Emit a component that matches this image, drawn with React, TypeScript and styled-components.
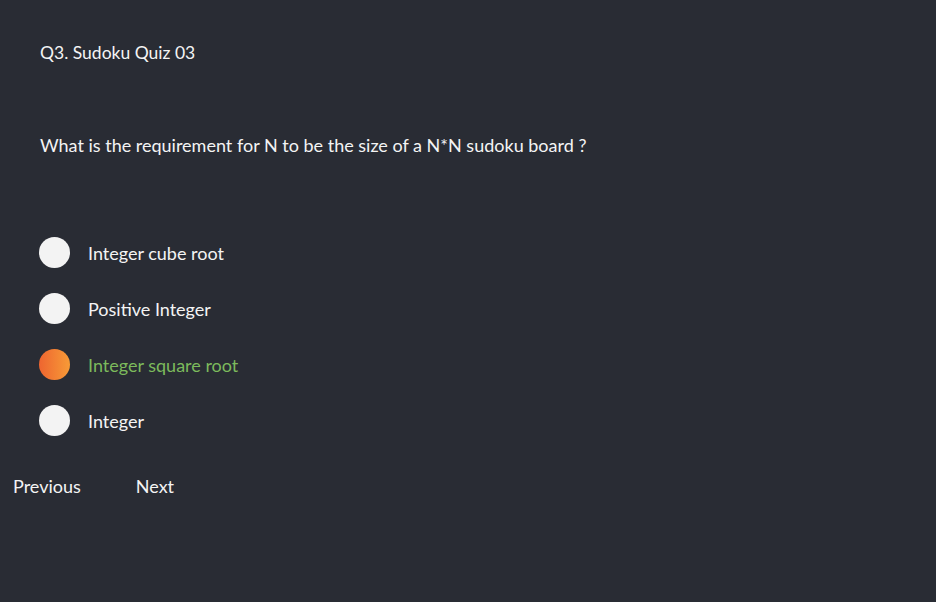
import React, { useState } from "react";
import styled, { createGlobalStyle } from "styled-components";

const Global = createGlobalStyle`
  html, body { margin: 0; padding: 0; background: #292c34; }
  body { font-family: Lato, "Noto Sans", sans-serif; color: #f4f4f4; }
`;

const Page = styled.div`
  width: 936px;
  height: 602px;
  background: #292c34;
  box-sizing: border-box;
  padding-top: 42px;
`;

const Title = styled.h2`
  margin: 0 0 0 40px;
  font-size: 17.5px;
  font-weight: 400;
  line-height: 22px;
`;

const Question = styled.p`
  margin: 70px 0 0 40px;
  font-size: 18px;
  line-height: 22px;
`;

const Options = styled.div`
  margin: 81px 0 0 39px;
  display: flex;
  flex-direction: column;
  gap: 25px;
`;

const Option = styled.label`
  display: flex;
  align-items: center;
  gap: 18px;
  cursor: pointer;
`;

const Dot = styled.span<{ $selected: boolean }>`
  width: 31px;
  height: 31px;
  border-radius: 50%;
  background: ${(p) =>
    p.$selected ? "linear-gradient(90deg, #ee6530, #f79b37)" : "#f3f3f3"};
`;

const OptionText = styled.span<{ $selected: boolean }>`
  font-size: 18px;
  color: ${(p) => (p.$selected ? "#7cba5c" : "#f4f4f4")};
`;

const Nav = styled.div`
  display: flex;
  gap: 55px;
  margin: 39px 0 0 13px;
`;

const NavButton = styled.button`
  background: none;
  border: none;
  padding: 0;
  font-family: Lato, "Noto Sans", sans-serif;
  font-size: 18px;
  color: #f4f4f4;
  cursor: pointer;
`;

const options = ["Integer cube root", "Positive Integer", "Integer square root", "Integer"];

export default function App() {
  const [sel, setSel] = useState(2);
  return (
    <Page>
      <Global />
      <Title>Q3. Sudoku Quiz 03</Title>
      <Question>What is the requirement for N to be the size of a N*N sudoku board ?</Question>
      <Options>
        {options.map((o, i) => (
          <Option key={o} onClick={() => setSel(i)}>
            <Dot $selected={sel === i} />
            <OptionText $selected={sel === i}>{o}</OptionText>
          </Option>
        ))}
      </Options>
      <Nav>
        <NavButton>Previous</NavButton>
        <NavButton>Next</NavButton>
      </Nav>
    </Page>
  );
}
